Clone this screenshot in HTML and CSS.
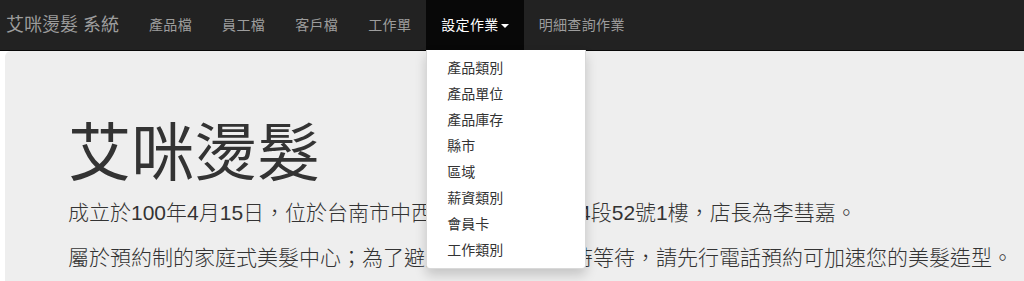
FILE: index.html
```html
<!DOCTYPE html>
<html lang="zh-Hant">
<head>
    <meta charset="UTF-8">
    <meta name="viewport" content="width=device-width, initial-scale=1.0">
    <title>艾咪燙髮 系統</title>
    <link rel="stylesheet" href="styles.css">
</head>
<body>
    <!-- TOP MENU -->
    <nav class="navbar">
        <a class="brand" href="#">艾咪燙髮 系統</a>
        <ul class="nav">
            <li><a href="#">產品檔</a></li>
            <li><a href="#">員工檔</a></li>
            <li><a href="#">客戶檔</a></li>
            <li><a href="#">工作單</a></li>
            <li class="dropdown">
                <a href="#" class="active">設定作業<span class="caret"></span></a>
                <ul class="dropdown-menu">
                    <li><a href="#">產品類別</a></li>
                    <li><a href="#">產品單位</a></li>
                    <li><a href="#">產品庫存</a></li>
                    <li><a href="#">縣市</a></li>
                    <li><a href="#">區域</a></li>
                    <li><a href="#">薪資類別</a></li>
                    <li><a href="#">會員卡</a></li>
                    <li><a href="#">工作類別</a></li>
                </ul>
            </li>
            <li><a href="#">明細查詢作業</a></li>
        </ul>
    </nav>
    <!-- MAIN CONTENT -->
    <div class="page">
        <div class="jumbotron">
            <h1>艾咪燙髮</h1>
            <p>成立於100年4月15日，位於台南市中西區西門路二段第4段52號1樓，店長為李彗嘉。</p>
            <p>屬於預約制的家庭式美髮中心；為了避免客人於現場臨時等待，請先行電話預約可加速您的美髮造型。</p>
        </div>
    </div>
</body>
</html>
```

FILE: styles.css
```css
/*PAGE*/
body{
    margin: 0;
    font-family: "Liberation Sans", "Noto Sans CJK TC", sans-serif;
    font-size: 14px;
    color: #333;
    background-color: #fff;
    overflow: hidden;
}
a{text-decoration: none;}
ul{
    list-style: none;
    margin: 0;
    padding: 0;
}
/*NAVBAR*/
.navbar{
    display: flex;
    height: 50px;
    background-color: #222;
    border-bottom: 1px solid #080808;
}
.brand{
    padding: 0 15px 0 6px;
    font-size: 18px;
    line-height: 50px;
    color: #9d9d9d;
}
.nav{
    display: flex;
}
.nav > li{
    position: relative;
}
.nav > li > a{
    display: block;
    padding: 0 15px;
    line-height: 50px;
    letter-spacing: 0.35px;
    color: #9d9d9d;
}
.nav > li > a.active{
    color: #fff;
    background-color: #080808;
}
.caret{
    display: inline-block;
    width: 0;
    height: 0;
    margin-left: 2px;
    vertical-align: middle;
    border-top: 4px solid;
    border-right: 4px solid transparent;
    border-left: 4px solid transparent;
}
/*DROPDOWN*/
.dropdown-menu{
    position: absolute;
    top: 100%;
    left: 0;
    z-index: 10;
    min-width: 160px;
    padding: 5px 0;
    background-color: #fff;
    border: 1px solid rgba(0,0,0,.15);
    border-top: 0;
    border-radius: 0 0 4px 4px;
    box-shadow: 0 6px 12px rgba(0,0,0,.175);
    box-sizing: border-box;
}
.dropdown-menu a{
    display: block;
    padding: 3px 20px;
    line-height: 20px;
    letter-spacing: 0;
    color: #333;
    white-space: nowrap;
}
/*JUMBOTRON*/
.page{
    padding-left: 5px;
}
.jumbotron{
    background-color: #eee;
    border-radius: 6px 0 0 6px;
    padding: 48px 0 48px 63px;
}
.jumbotron h1{
    margin: 0 0 10px;
    padding-top: 20px;
    font-size: 63px;
    font-weight: 400;
    line-height: 1.1;
}
.jumbotron p{
    margin: 0 0 15px;
    font-size: 21px;
    font-weight: 300;
    line-height: 30px;
    white-space: nowrap;
}
```
